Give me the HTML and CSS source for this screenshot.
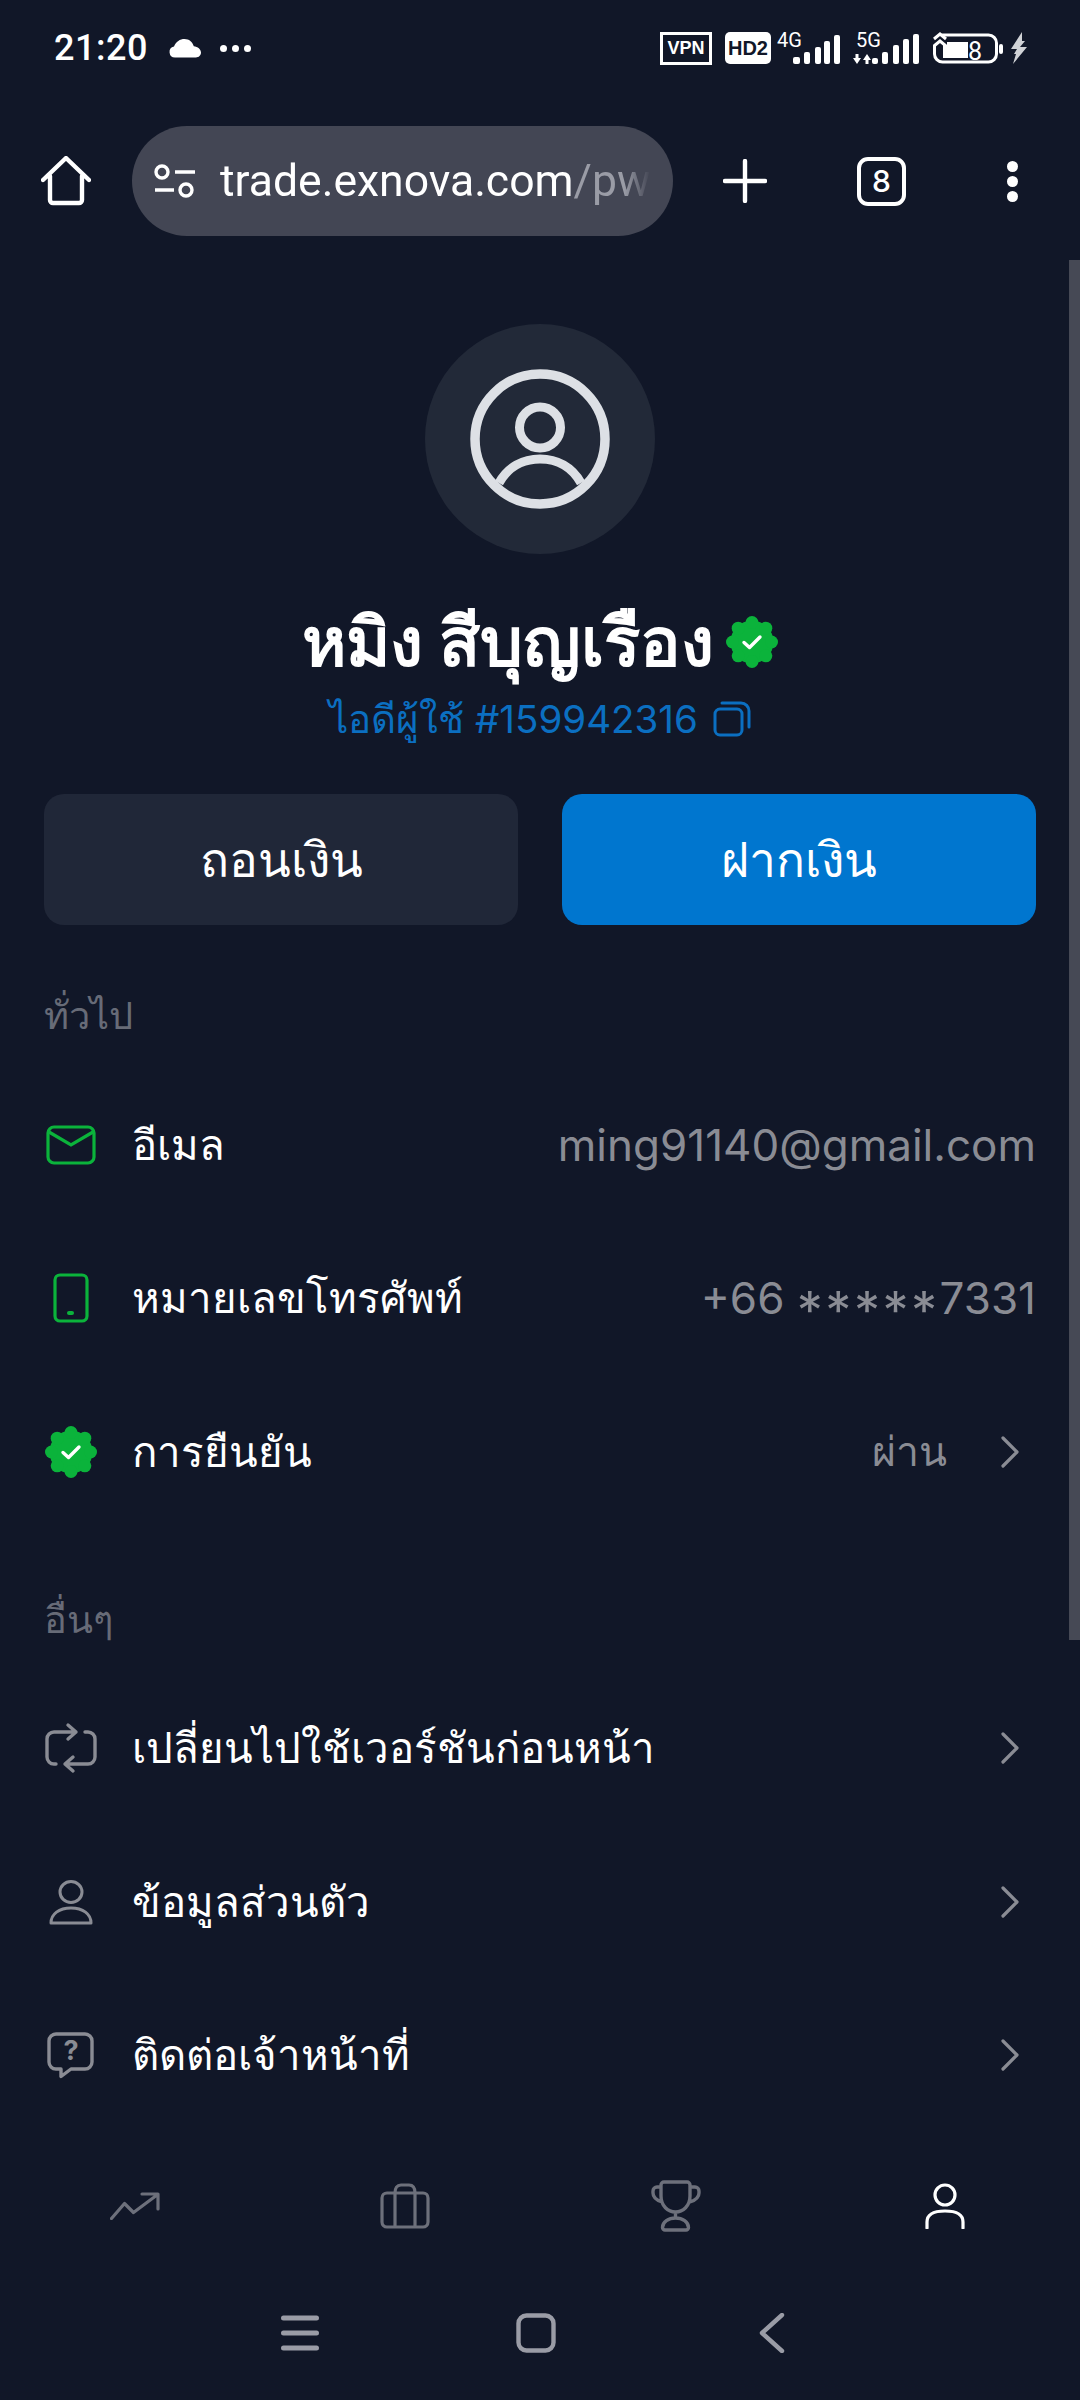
FILE: index.html
```html
<!DOCTYPE html>
<html lang="th">
  <head>
    <meta charset="UTF-8" />
    <meta name="viewport" content="width=device-width, initial-scale=1.0" />
    <title>Profile</title>
    <link rel="stylesheet" href="styles.css">
  </head>
  <body>
    <svg class="defs" width="0" height="0">
      <symbol id="badge" viewBox="0 0 52 52">
        <circle cx="26" cy="26" r="21.5" fill="#0bb33b" />
        <circle cx="26" cy="6.500" r="6.5" fill="#0bb33b" />
        <circle cx="39.8" cy="12.2" r="6.5" fill="#0bb33b" />
        <circle cx="45.5" cy="26" r="6.5" fill="#0bb33b" />
        <circle cx="39.8" cy="39.8" r="6.5" fill="#0bb33b" />
        <circle cx="26" cy="45.5" r="6.5" fill="#0bb33b" />
        <circle cx="12.2" cy="39.8" r="6.5" fill="#0bb33b" />
        <circle cx="6.500" cy="26" r="6.5" fill="#0bb33b" />
        <circle cx="12.2" cy="12.2" r="6.5" fill="#0bb33b" />
        <path d="M18 26.5l5.5 5L34 21" fill="none" stroke="#fff" stroke-width="3.4" stroke-linecap="round" stroke-linejoin="round" />
      </symbol>
      <symbol id="chevron" viewBox="0 0 18 32">
        <path d="M2 2l14 14L2 30" fill="none" stroke="currentColor" stroke-width="3.2" stroke-linecap="round" stroke-linejoin="round" />
      </symbol>
    </svg>

    <header class="status-bar">
      <div class="status-left">
        <span class="time">21:20</span>
        <svg class="cloud" viewBox="0 0 34 20"><path d="M7 19.500a5.500 5.500 0 0 1-1-10.900C8 3.500 12 1 16.500 1c4.500 0 8 2.800 9.300 7.200 3.900.3 7.200 3 7.200 6.400 0 3-2.300 4.900-5 4.900z" fill="#fff" /></svg>
        <span class="status-dots"><i></i><i></i><i></i></span>
      </div>
      <div class="status-right">
        <span class="vpn">VPN</span>
        <span class="hd">HD2</span>
        <svg class="signal" viewBox="0 0 64 34">
          <text x="0" y="16" class="net-label">4G</text>
          <g fill="#fff"><rect x="16" y="26" width="7" height="7" rx="2" /><rect x="27" y="21" width="6" height="12" rx="2" /><rect x="38" y="16" width="6" height="17" rx="2" /><rect x="47" y="10" width="6" height="23" rx="2" /><rect x="57" y="4" width="6" height="29" rx="2" /></g>
        </svg>
        <svg class="signal wide" viewBox="0 0 66 34">
          <text x="3" y="16" class="net-label">5G</text>
          <path d="M0 27h2.500v-4h3v4H8l-4 6zM10 29h2.500v4h3v-4H18l-4-6z" fill="#fff" />
          <g fill="#fff"><rect x="19" y="27" width="6" height="6" rx="2" /><rect x="29" y="21" width="6" height="12" rx="2" /><rect x="40" y="14" width="6" height="19" rx="2" /><rect x="50" y="8" width="6" height="25" rx="2" /><rect x="60" y="3" width="6" height="30" rx="2" /></g>
        </svg>
        <svg class="battery" viewBox="0 0 70 34">
          <rect x="1.500" y="4" width="62" height="27" rx="8" fill="none" stroke="#fff" stroke-width="3" />
          <rect x="10" y="11" width="25" height="16" fill="#fff" />
          <rect x="66" y="13" width="4" height="10" rx="2" fill="#fff" />
          <path d="M0 8l7-6 7 6v6H0z" fill="#111728" />
          <path d="M1 8l6-5 6 5M1 15l6-5 6 5" fill="none" stroke="#fff" stroke-width="3" />
          <text x="35" y="29" class="battery-num">8</text>
        </svg>
        <svg class="bolt" viewBox="0 0 18 32"><path d="M12 0L1 17h6l-3 5 2 0-3 10 14-17h-7l5-6h-3z" fill="#d0d2d6" /></svg>
      </div>
    </header>

    <div class="toolbar">
      <svg class="tool-icon home" viewBox="0 0 50 50"><path d="M2 24L25 2l23 22M9 20v24a3 3 0 0 0 3 3h26a3 3 0 0 0 3-3V20" fill="none" stroke="#fff" stroke-width="4.400" stroke-linecap="round" stroke-linejoin="round" /></svg>
      <div class="url-pill">
        <svg class="tune" viewBox="0 0 42 34"><circle cx="8" cy="8" r="6" fill="none" stroke="#fff" stroke-width="3.400" /><circle cx="32" cy="26" r="6" fill="none" stroke="#fff" stroke-width="3.400" /><path d="M21 8h20M1 26h19" stroke="#fff" stroke-width="3.400" /></svg>
        <div class="url"><span class="url-host">trade.exnova.com</span><span class="url-path">/pwa</span></div>
      </div>
      <svg class="tool-icon plus" viewBox="0 0 44 44"><path d="M22 2v40M2 22h40" stroke="#fff" stroke-width="4.400" stroke-linecap="round" /></svg>
      <div class="tab-count">8</div>
      <div class="more"><i></i><i></i><i></i></div>
    </div>

    <main class="page">
      <section class="profile">
        <div class="avatar">
          <svg viewBox="0 0 140 140" width="140" height="140">
            <circle cx="70" cy="70" r="65" fill="none" stroke="#dde0e5" stroke-width="9.500" />
            <circle cx="70" cy="58.500" r="20.500" fill="none" stroke="#dde0e5" stroke-width="9" />
            <path d="M29 114C38 98 53 90 70 90S102 98 111 114" fill="none" stroke="#dde0e5" stroke-width="9" />
          </svg>
        </div>
        <div class="name-row">
          <h1 class="name">หมิง สีบุญเรือง</h1>
          <svg class="name-badge"><use href="#badge" /></svg>
        </div>
        <div class="user-id">
          <span>ไอดีผู้ใช้ #159942316</span>
          <svg class="copy" viewBox="0 0 38 36"><rect x="2" y="8" width="27" height="26" rx="5" fill="none" stroke="currentColor" stroke-width="3" /><path d="M9 2h19a8 8 0 0 1 8 8v16" fill="none" stroke="currentColor" stroke-width="3" stroke-linecap="round" /></svg>
        </div>
        <div class="actions">
          <button class="btn btn-dark">ถอนเงิน</button>
          <button class="btn btn-blue">ฝากเงิน</button>
        </div>
      </section>

      <section class="group">
        <h2 class="group-title">ทั่วไป</h2>
        <div class="row">
          <span class="row-icon green"><svg width="50" height="40" viewBox="0 0 50 40"><rect x="2" y="2" width="46" height="36" rx="6" fill="none" stroke="currentColor" stroke-width="3.200" /><path d="M3 7l22 13L47 7" fill="none" stroke="currentColor" stroke-width="3.200" /></svg></span>
          <span class="row-label">อีเมล</span>
          <span class="row-value">ming91140@gmail.com</span>
        </div>
        <div class="row">
          <span class="row-icon green"><svg width="36" height="50" viewBox="0 0 36 50"><rect x="2" y="2" width="32" height="46" rx="5" fill="none" stroke="currentColor" stroke-width="3.200" /><rect x="14" y="38" width="7" height="4" rx="2" fill="currentColor" /></svg></span>
          <span class="row-label">หมายเลขโทรศัพท์</span>
          <span class="row-value">+66 <span class="stars">*****</span>7331</span>
        </div>
        <div class="row">
          <span class="row-icon"><svg width="52" height="52"><use href="#badge" /></svg></span>
          <span class="row-label">การยืนยัน</span>
          <span class="row-value thai">ผ่าน</span>
          <svg class="chevron"><use href="#chevron" /></svg>
        </div>
      </section>

      <section class="group group-other">
        <h2 class="group-title">อื่นๆ</h2>
        <div class="row">
          <span class="row-icon gray"><svg width="54" height="54" viewBox="9 11 54 54"><path d="M41 22H19a7 7 0 0 0-7 7v18a7 7 0 0 0 7 7h2M33 15l8 7-8 7M50 22h3a7 7 0 0 1 7 7v18a7 7 0 0 1-7 7H30M38 47l-8 7 8 7" fill="none" stroke="currentColor" stroke-width="3.400" stroke-linecap="round" stroke-linejoin="round" /></svg></span>
          <span class="row-label">เปลี่ยนไปใช้เวอร์ชันก่อนหน้า</span>
          <svg class="chevron"><use href="#chevron" /></svg>
        </div>
        <div class="row">
          <span class="row-icon gray"><svg width="44" height="46" viewBox="0 0 44 46"><ellipse cx="22" cy="13" rx="11" ry="10.500" fill="none" stroke="currentColor" stroke-width="3" /><path d="M2 44c0-9 8-15 20-15s20 6 20 15z" fill="none" stroke="currentColor" stroke-width="3" stroke-linejoin="round" /></svg></span>
          <span class="row-label">ข้อมูลส่วนตัว</span>
          <svg class="chevron"><use href="#chevron" /></svg>
        </div>
        <div class="row">
          <span class="row-icon gray"><svg width="54" height="54" viewBox="9 9 54 54"><path d="M21 15H50a7 7 0 0 1 7 7V43a7 7 0 0 1-7 7H36L26 57.500V50H21a7 7 0 0 1-7-7V22a7 7 0 0 1 7-7z" fill="none" stroke="currentColor" stroke-width="3.400" stroke-linejoin="round" /><text x="36" y="41" class="help-mark">?</text></svg></span>
          <span class="row-label">ติดต่อเจ้าหน้าที่</span>
          <svg class="chevron"><use href="#chevron" /></svg>
        </div>
      </section>

      <div class="scrollbar"></div>
    </main>

    <nav class="tab-bar">
      <a class="tab"><svg width="50" height="28" viewBox="0 0 50 28"><path d="M1.500 26.500l13-15 9 9L47 3M32 2h16v15" fill="none" stroke="#6d707b" stroke-width="3.200" stroke-linecap="round" stroke-linejoin="round" /></svg></a>
      <a class="tab"><svg width="50" height="46" viewBox="0 0 50 46"><rect x="2" y="10" width="46" height="34" rx="5" fill="none" stroke="#6d707b" stroke-width="3.200" /><path d="M15 44V10M35 44V10M15 10c0-5 2-8 6-8h8c4 0 6 3 6 8" fill="none" stroke="#6d707b" stroke-width="3.200" /></svg></a>
      <a class="tab"><svg width="54" height="54" viewBox="18 10 54 54"><path d="M34 13H57a3 3 0 0 1 3 3V27C60 37 53 43 45.500 43S31 37 31 27V16a3 3 0 0 1 3-3zM31 18H27a4 4 0 0 0-4 4v2c0 4 3 7 9 9M60 18h5a4 4 0 0 1 4 4v2c0 4-3 7-9 9M45.500 43v6M35 61H56a2.500 2.500 0 0 0 2.500-2.500C58.500 53 52.500 49 45.500 49S32.500 53 32.500 58.500A2.500 2.500 0 0 0 35 61z" fill="none" stroke="#6d707b" stroke-width="3.400" stroke-linejoin="round" /></svg></a>
      <a class="tab"><svg width="40" height="46" viewBox="0 0 40 46"><circle cx="20" cy="12" r="10" fill="none" stroke="#fff" stroke-width="3.200" /><path d="M2 45v-6c0-7 6-11 18-11s18 4 18 11v6" fill="none" stroke="#fff" stroke-width="3.200" stroke-linecap="round" /></svg></a>
    </nav>

    <div class="nav-bar">
      <svg width="38" height="36" viewBox="0 0 38 36"><path d="M2.500 3h33M2.500 18h33M2.500 33h33" stroke="#9a9ca6" stroke-width="5" stroke-linecap="round" /></svg>
      <svg class="nav-home" width="40" height="40" viewBox="0 0 40 40"><rect x="2.500" y="2.500" width="35" height="35" rx="8" fill="none" stroke="#9a9ca6" stroke-width="4.400" /></svg>
      <svg width="26" height="40" viewBox="0 0 26 40"><path d="M23 2L3 20l20 18" fill="none" stroke="#9a9ca6" stroke-width="4.400" stroke-linecap="round" stroke-linejoin="round" /></svg>
    </div>
  </body>
</html>
```

FILE: styles.css
```css
* {
  box-sizing: border-box;
}
body {
  margin: 0;
  width: 1080px;
  height: 2400px;
  overflow: hidden;
  background-color: #111728;
  color: #ffffff;
  font-family: Inter, "Noto Sans", "DejaVu Sans", sans-serif;
  display: flex;
  flex-direction: column;
}
.defs {
  position: absolute;
}

/* status bar */
.status-bar {
  height: 96px;
  padding: 0 52px 0 54px;
  display: flex;
  align-items: center;
  justify-content: space-between;
}
.status-left {
  display: flex;
  align-items: center;
}
.time {
  font-family: Roboto, sans-serif;
  font-size: 36px;
  font-weight: 500;
  letter-spacing: 0.5px;
}
.cloud {
  width: 34px;
  height: 20px;
  margin-left: 20px;
}
.status-dots {
  display: flex;
  gap: 5px;
  margin-left: 18px;
}
.status-dots i {
  width: 7px;
  height: 7px;
  border-radius: 50%;
  background-color: #fff;
}
.status-right {
  display: flex;
  align-items: center;
}
.vpn {
  width: 52px;
  height: 33px;
  border: 3.5px solid #fff;
  font-family: "Liberation Sans", sans-serif;
  font-size: 18px;
  font-weight: 700;
  display: flex;
  align-items: center;
  justify-content: center;
}
.hd {
  width: 46px;
  height: 32px;
  margin-left: 13px;
  border-radius: 5px;
  background-color: #fff;
  color: #111728;
  font-family: "Liberation Sans", sans-serif;
  font-size: 20px;
  font-weight: 700;
  display: flex;
  align-items: center;
  justify-content: center;
}
.signal {
  width: 64px;
  height: 34px;
  margin-left: 6px;
  overflow: visible;
}
.signal.wide {
  width: 66px;
  margin-left: 12px;
}
.net-label {
  font-family: Roboto, sans-serif;
  font-size: 20px;
  fill: #fff;
}
.battery {
  width: 70px;
  height: 34px;
  margin-left: 14px;
}
.battery-num {
  font-family: Roboto, sans-serif;
  font-size: 25px;
  fill: #fff;
}
.bolt {
  width: 18px;
  height: 32px;
  margin-left: 7px;
}

/* browser toolbar */
.toolbar {
  height: 110px;
  margin-top: 30px;
  display: flex;
  align-items: center;
}
.tool-icon {
  flex: none;
}
.home {
  width: 50px;
  height: 50px;
  margin-left: 41px;
}
.url-pill {
  width: 541px;
  height: 110px;
  margin-left: 41px;
  padding: 0 22px;
  border-radius: 55px;
  background-color: #434654;
  display: flex;
  align-items: center;
}
.tune {
  flex: none;
  width: 42px;
  height: 34px;
}
.url {
  margin-left: 24px;
  width: 430px;
  overflow: hidden;
  white-space: nowrap;
  font-family: Roboto, sans-serif;
  font-size: 44.500px;
  -webkit-mask-image: linear-gradient(to right, #000 94%, transparent 100%);
  mask-image: linear-gradient(to right, #000 94%, transparent 100%);
}
.url-path {
  color: #9a9ca6;
}
.plus {
  width: 44px;
  height: 44px;
  margin-left: 50px;
}
.tab-count {
  flex: none;
  width: 49px;
  height: 49px;
  margin-left: 90px;
  border: 4.500px solid #fff;
  border-radius: 11px;
  font-size: 30px;
  font-weight: 500;
  display: flex;
  align-items: center;
  justify-content: center;
}
.more {
  flex: none;
  margin-left: 101px;
  display: flex;
  flex-direction: column;
  gap: 4px;
}
.more i {
  width: 11px;
  height: 11px;
  border-radius: 50%;
  background-color: #fff;
}

/* page */
.page {
  position: relative;
  height: 1880px;
  margin-top: 24px;
  padding: 64px 44px 0;
}
.scrollbar {
  position: absolute;
  top: 0;
  right: 0;
  width: 11px;
  height: 1380px;
  background-color: #464955;
}
.profile {
  display: flex;
  flex-direction: column;
  align-items: center;
}
.avatar {
  width: 230px;
  height: 230px;
  border-radius: 50%;
  background-color: #222938;
  display: flex;
  align-items: center;
  justify-content: center;
}
.name-row {
  margin-top: 40px;
  height: 96px;
  display: flex;
  align-items: center;
  gap: 12px;
}
.name {
  margin: 0;
  font-size: 67.500px;
  font-weight: 700;
  white-space: nowrap;
}
.name-badge {
  width: 52px;
  height: 52px;
}
.user-id {
  height: 50px;
  margin-top: 4px;
  display: flex;
  align-items: center;
  gap: 15px;
  color: #0b6fc1;
  font-size: 38.500px;
}
.copy {
  width: 38px;
  height: 36px;
}
.actions {
  align-self: stretch;
  margin-top: 50px;
  display: flex;
  gap: 44px;
}
.btn {
  flex: 1;
  height: 131px;
  border: none;
  border-radius: 20px;
  color: #fff;
  font-family: inherit;
  font-size: 48px;
}
.btn-dark {
  background-color: #202738;
}
.btn-blue {
  background-color: #0076cf;
}

.group {
  margin-top: 60px;
}
.group-title {
  margin: 0 0 23px;
  height: 60px;
  line-height: 60px;
  color: #676b77;
  font-size: 38px;
  font-weight: 400;
}
.row {
  height: 153.500px;
  display: flex;
  align-items: center;
}
.row-icon {
  flex: none;
  width: 54px;
  margin-right: 34px;
  display: flex;
  align-items: center;
  justify-content: center;
}
.green {
  color: #0bb33b;
}
.gray {
  color: #8a8c94;
}
.help-mark {
  font-family: Inter, sans-serif;
  font-size: 27px;
  font-weight: 700;
  text-anchor: middle;
  fill: currentColor;
}
.row-label {
  flex: 1;
  font-size: 42px;
}
.row-value {
  color: #8a8c94;
  font-size: 44px;
}
.row-value.thai {
  font-size: 41px;
}
.stars {
  font-size: 52px;
  line-height: 0;
  letter-spacing: 2.500px;
  vertical-align: -15px;
}
.chevron {
  flex: none;
  width: 18px;
  height: 32px;
  margin: 0 17px 0 54px;
  color: #8a8c94;
}
.row-label + .chevron {
  margin-left: 0;
}

/* bottom */
.tab-bar {
  height: 132px;
  display: grid;
  grid-template-columns: repeat(4, 270px);
}
.tab {
  display: flex;
  align-items: center;
  justify-content: center;
}
.nav-bar {
  height: 122px;
  padding: 0 295px 0 281px;
  display: flex;
  align-items: center;
  justify-content: space-between;
}
.nav-home {
  margin-right: 6px;
}
```
